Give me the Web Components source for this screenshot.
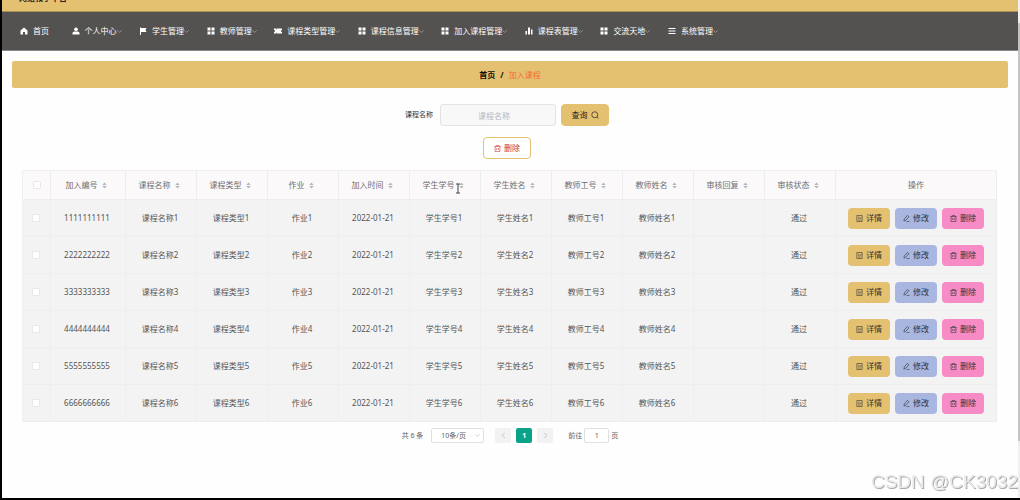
<!DOCTYPE html>
<html lang="zh-CN">
<head>
<meta charset="utf-8">
<title>加入课程</title>
<style>
html, body { margin: 0; }
body {
  font-family: "Noto Sans", "Noto Sans CJK SC", sans-serif;
  font-size: 8px;
  line-height: 12px;
  color: #555;
  background: #fefefe;
  --gold: #e4c170;
}
</style>
</head>
<body>
<app-shell>
  <site-header slot="header">网络教学平台</site-header>
  <site-nav slot="nav">
    <nav-item icon="home">首页</nav-item>
    <nav-item icon="user" menu>个人中心</nav-item>
    <nav-item icon="flag" menu>学生管理</nav-item>
    <nav-item icon="grid" menu>教师管理</nav-item>
    <nav-item icon="ticket" menu>课程类型管理</nav-item>
    <nav-item icon="grid" menu>课程信息管理</nav-item>
    <nav-item icon="grid" menu>加入课程管理</nav-item>
    <nav-item icon="bars" menu>课程表管理</nav-item>
    <nav-item icon="grid" menu>交流天地</nav-item>
    <nav-item icon="menu" menu>系统管理</nav-item>
  </site-nav>
  <crumb-bar parent="首页">加入课程</crumb-bar>
  <search-form></search-form>
  <course-table></course-table>
  <page-bar></page-bar>
</app-shell>
<water-mark>CSDN @CK3032</water-mark>

<script>
const svg = (body, size = 8, extra = '') =>
  `<svg width="${size}" height="${size}" viewBox="0 0 16 16" aria-hidden="true" ${extra}>${body}</svg>`;
const line = 'fill="none" stroke="currentColor" stroke-width="1.4"';
const ICONS = {
  home: '<path fill="currentColor" d="M8 1 1 7v8h5v-5h4v5h5V7z"/>',
  user: '<circle cx="8" cy="4.5" r="3.7" fill="currentColor"/><path fill="currentColor" d="M1 15v-3q0-3 4-3h6q4 0 4 3v3z"/>',
  flag: '<path fill="currentColor" d="M2 1h2v1h11l-2 4 2 4H4v6H2z"/>',
  grid: '<path fill="currentColor" d="M1 1h6v6H1zM9 1h6v6H9zM1 9h6v6H1zM9 9h6v6H9z"/>',
  ticket: '<path fill="currentColor" d="M0 3h5v2h1V3h10v3q-2 0-2 2t2 2v3H6v-2H5v2H0v-3q2 0 2-2T0 6z"/>',
  bars: '<path fill="currentColor" d="M1 8h3v7H1zM6 1h4v14H6zM12 5h3v10h-3z"/>',
  menu: '<path fill="currentColor" d="M1 2h14v2H1zM1 7h14v2H1zM1 12h14v2H1z"/>',
  search: `<circle cx="7.5" cy="7.5" r="6" ${line}/><path d="m12 12 3 3" ${line}/>`,
  trash: `<path d="M1 3.5h14M5 3.5V1h6v2.500M2.500 3.500V15h11V3.500M6 7v4.500M10 7v4.500" ${line}/>`,
  detail: `<path d="M2 1h12v14H2zM5 5h3M5 8h3M5 11.500h6M11 5v4" ${line}/>`,
  edit: `<path d="m2 14 1-5 7-8 3.500 3-7 8zM8 15h7" ${line}/>`,
  down: '<path d="m1 4 7 7 7-7" fill="none" stroke="currentColor" stroke-width="2"/>',
  left: `<path d="m11 2-6 6 6 6" ${line}/>`,
  right: `<path d="m5 2 6 6-6 6" ${line}/>`,
  sort: '<path fill="#b3b5ba" d="M8 1 3 7h10zM8 15 3 9h10z"/>'
};
const icon = (name, size, extra) => svg(ICONS[name], size, extra);

function define(name, render) {
  customElements.define(name, class extends HTMLElement {
    constructor() { super(); this.attachShadow({ mode: 'open' }); }
    connectedCallback() {
      const t = document.createElement('template');
      t.innerHTML = render(this);
      this.shadowRoot.replaceChildren(t.content.cloneNode(true));
    }
  });
}

define('app-shell', () => `
<style>
  :host { display: grid; grid-template-columns: 1fr 2px; min-height: 100vh; box-sizing: border-box;
    border-left: 2px solid #000; border-bottom: 2px solid #000; }
  main { display: flex; flex-direction: column; padding: 10px; }
  .track { background: #f0f0f0; padding-top: 23px; box-sizing: border-box; }
  .thumb { height: 88%; background: #c4c4c4; }
</style>
<div><slot name="header"></slot><slot name="nav"></slot><main><slot></slot></main></div>
<div class="track"><div class="thumb"></div></div>`);

define('site-header', () => `
<style>
  :host { display: flex; align-items: flex-end; height: 12px; overflow: hidden; box-sizing: border-box;
    padding: 0 17px 7px; background: var(--gold); border-bottom: 1px solid #aa9158; color: #222; font-weight: 700; }
</style><slot></slot>`);

define('site-nav', () => `
<style>
  :host { display: block; background: #545250; color: #fff; border-bottom: 1px solid #85858a; }
  nav { display: flex; justify-content: space-between; align-items: center; min-height: 38px; padding: 0 300px 0 18px; }
</style><nav><slot></slot></nav>`);

define('nav-item', el => `
<style>
  :host { display: block; white-space: nowrap; }
  a { display: flex; align-items: center; color: inherit; text-decoration: none; }
  .text { margin-left: 5px; }
  .more { width: 5px; display: flex; color: #b4b4b4; }
</style>
<a href="#">${icon(el.getAttribute('icon'), 8)}<span class="text"><slot></slot></span><span class="more">${
  el.hasAttribute('menu') ? icon('down', 5) : ''}</span></a>`);

define('crumb-bar', el => `
<style>
  :host { display: block; background: var(--gold); border-radius: 2px; padding: 8px; }
  nav { display: flex; justify-content: center; gap: 5px; line-height: 11px; }
  a { color: #111; font-weight: 700; text-decoration: none; }
  b { color: #111; }
  span { color: #f56c2d; }
</style>
<nav aria-label="面包屑"><a href="#">${el.getAttribute('parent')}</a><b>/</b><span><slot></slot></span></nav>`);

define('search-form', () => `
<style>
  :host { display: block; padding: 16px 6px 0 0; }
  form { display: flex; flex-direction: column; align-items: center; gap: 11px; }
  .row { display: flex; align-items: center; }
  label { font-size: 7px; color: #333; margin-right: 7px; }
  input, button { font: inherit; box-sizing: border-box; height: 22px; border-radius: 4px; }
  input { width: 116px; border: 1px solid #e3e3e6; border-radius: 3px; background: #f8f8f9; text-align: center; padding: 0 16px 0 8px; color: #555; outline: 0; }
  input::placeholder { color: #b5b7bd; }
  button { display: flex; align-items: center; justify-content: center; gap: 3px; width: 48px; padding: 0; border: 1px solid var(--gold); }
  .go { margin-left: 5px; background: var(--gold); color: #222; }
  .del { background: #fff; color: #c33; }
</style>
<form onsubmit="return false">
  <div class="row"><label for="name">课程名称</label><input id="name" placeholder="课程名称"><button class="go">查询${icon('search', 8)}</button></div>
  <button class="del" type="button">${icon('trash', 7)}删除</button>
</form>`);

define('action-button', el => `
<style>
  :host { display: block; }
  button { display: flex; align-items: center; justify-content: center; gap: 3px; width: 42px; height: 21px; padding: 0;
    border: 0; border-radius: 4px; font: inherit; color: #333; background: var(--tone); }
</style>
<button type="button">${icon(el.getAttribute('icon'), 7)}<slot></slot></button>`);

define('text-cursor', () => `
<style>:host { position: absolute; left: 45px; top: 12px; color: #444; } svg { display: block; }</style>
<svg width="6" height="11" viewBox="0 0 6 11" aria-hidden="true"><path d="M1 1h4M3 1v9M1 10h4" fill="none" stroke="currentColor"/></svg>`);

define('course-table', () => {
  const heads = ['加入编号', '课程名称', '课程类型', '作业', '加入时间', '学生学号', '学生姓名', '教师工号', '教师姓名', '审核回复', '审核状态'];
  const th = h => `<th scope="col"><span class="head">${h}${icon('sort', 7)}</span>${h === '学生学号' ? '<text-cursor></text-cursor>' : ''}</th>`;
  const box = label => `<input type="checkbox" aria-label="${label}">`;
  const row = n => `<tr><td>${box('选择第' + n + '行')}</td>${
    [String(n).repeat(10), '课程名称' + n, '课程类型' + n, '作业' + n, '2022-01-21', '学生学号' + n, '学生姓名' + n, '教师工号' + n, '教师姓名' + n, '', '通过']
      .map(c => `<td>${c}</td>`).join('')}<td class="ops"><div class="acts">
      <action-button icon="detail" style="--tone:#e4c170">详情</action-button>
      <action-button icon="edit" style="--tone:#a9b6e0">修改</action-button>
      <action-button icon="trash" style="--tone:#f78bc5">删除</action-button></div></td></tr>`;
  return `
<style>
  :host { display: block; padding: 11px 11px 0 10px; }
  table { width: 100%; table-layout: fixed; border-collapse: separate; border-spacing: 0; border-top: 1px solid #f0f0f0; border-left: 1px solid #f0f0f0; box-sizing: border-box; text-align: center; }
  .pick { width: 28px; } .id { width: 75px; } .std { width: 71px; }
  th, td { padding: 0; box-sizing: border-box; border-right: 1px solid #eeeeef; border-bottom: 1px solid #eeeeef; }
  th { position: relative; height: 29px; background: #fbf9fa; color: #6d6e72; font-weight: 400; }
  td { height: 37px; padding-right: 2px; background: #f3f3f3; color: #555; }
  td.ops { padding-right: 0; }
  .head { display: flex; align-items: center; justify-content: center; gap: 3px; padding-right: 3px; }
  .acts { display: flex; justify-content: center; gap: 5px; }
  input { appearance: none; display: block; width: 8px; height: 8px; margin: 0 auto; border: 1px solid #e8e8ea; border-radius: 1px; background: #fff; }
</style>
<table>
  <colgroup><col class="pick"><col class="id">${'<col class="std">'.repeat(10)}<col></colgroup>
  <thead><tr><th scope="col">${box('全选')}</th>${heads.map(th).join('')}<th scope="col">操作</th></tr></thead>
  <tbody>${[1, 2, 3, 4, 5, 6].map(row).join('')}</tbody>
</table>`;
});

define('page-bar', () => `
<style>
  :host { display: flex; justify-content: center; align-items: center; padding-top: 6px; font-size: 7px; color: #606266; }
  select, input, button { font: inherit; color: inherit; box-sizing: border-box; height: 15px; border-radius: 2px; padding: 0; }
  .size { display: grid; align-items: center; margin: 0 11px 0 8px; }
  .size > * { grid-area: 1 / 1; }
  .size svg { justify-self: end; margin-right: 4px; color: #bbb; pointer-events: none; }
  select { appearance: none; width: 53px; padding-left: 9px; border: 1px solid #e0e0e3; background: #fff; }
  .pages { display: flex; gap: 5px; margin-right: 15px; }
  button { display: grid; place-items: center; width: 16px; border: 0; background: #f2f2f3; color: #aaa; }
  .on { background: #0aa38a; color: #fff; font-weight: 700; }
  input { width: 25px; margin: 0 2px; border: 1px solid #e0e0e3; background: #fff; text-align: center; }
</style>
<span>共 6 条</span>
<span class="size"><select aria-label="每页条数"><option>10条/页</option></select>${icon('down', 5)}</span>
<div class="pages"><button aria-label="上一页">${icon('left', 7)}</button><button class="on" aria-current="page">1</button><button aria-label="下一页">${icon('right', 7)}</button></div>
<label for="jump">前往</label><input id="jump" value="1"><span>页</span>`);

define('water-mark', () => `
<style>
  :host { position: fixed; right: 2px; bottom: 6px; font: 19px/24px "Liberation Sans", sans-serif; color: #e8e8e8;
    text-shadow: 1px 1px 0 #aaa; pointer-events: none; white-space: nowrap; }
</style><slot></slot>`);
</script>
</body>
</html>
